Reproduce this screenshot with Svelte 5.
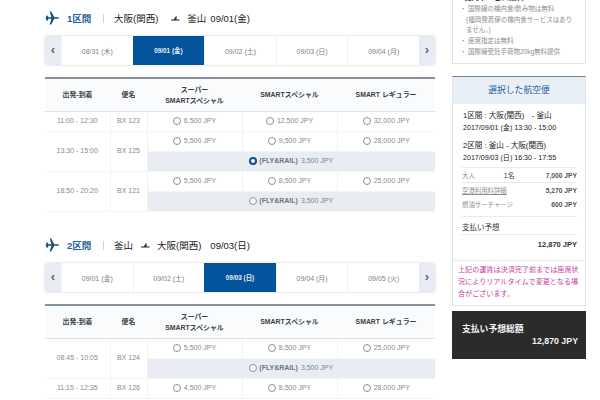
<script>
  const sections = [
    {
      label: "1区間",
      from: "大阪(関西)",
      to: "釜山",
      date: "09/01(金)",
      dates: ["08/31 (木)", "09/01 (金)", "09/02 (土)", "09/03 (日)", "09/04 (月)"],
      active: 1,
      flights: [
        { time: "11:00 - 12:30", no: "BX 123", fares: ["6,500", "12,500", "32,000"] },
        { time: "13:30 - 15:00", no: "BX 125", fares: ["5,500", "9,500", "28,000"], rail: "3,500", railOn: true },
        { time: "18:50 - 20:20", no: "BX 121", fares: ["5,500", "8,500", "25,000"], rail: "3,500" },
      ],
    },
    {
      label: "2区間",
      from: "釜山",
      to: "大阪(関西)",
      date: "09/03(日)",
      dates: ["09/01 (金)", "09/02 (土)", "09/03 (日)", "09/04 (月)", "09/05 (火)"],
      active: 2,
      flights: [
        { time: "08:45 - 10:05", no: "BX 124", fares: ["5,500", "8,500", "25,000"], rail: "3,500" },
        { time: "11:15 - 12:35", no: "BX 126", fares: ["4,500", "8,500", "28,000"] },
      ],
    },
  ];
</script>

<div class="page">
  <main class="left">
    {#each sections as s}
      <section class="leg">
        <h2 class="leg-title">
          <svg class="plane" viewBox="0 0 24 24" width="14" height="14">
            <path d="M1 12 L3 7.500 L4.500 7.500 L6 10.800 L11 10.800 L8 1 L10.500 1 L16 10.800 L21 10.800 C23 10.800 24 11.400 24 12 C24 12.600 23 13.200 21 13.200 L16 13.200 L10.500 23 L8 23 L11 13.200 L6 13.200 L4.500 16.500 L3 16.500 Z" fill="#14507f" />
          </svg>
          <span class="leg-no">{s.label}</span>
          <span class="sep"></span>
          <span>{s.from}</span>
          <span class="arrow">
            <svg viewBox="0 0 9 5" width="9" height="5"><path d="M0 4 H8.500 M3 4 L5 1.200 V4" fill="none" stroke="#222" stroke-width="1.100" /></svg>
          </span>
          <span>{s.to}</span>
          <span class="leg-date">{s.date}</span>
        </h2>

        <div class="dates">
          <span class="nav">‹</span>
          {#each s.dates as d, i}
            <span class="date" class:on={i === s.active}>{d}</span>
          {/each}
          <span class="nav">›</span>
        </div>

        <table>
          <colgroup>
            <col style="width:65px" />
            <col style="width:37px" />
            <col style="width:95px" />
            <col style="width:95px" />
            <col style="width:98px" />
          </colgroup>
          <thead>
            <tr>
              <th>出発-到着</th>
              <th>便名</th>
              <th>スーパー<br />SMARTスペシャル</th>
              <th>SMARTスペシャル</th>
              <th>SMART レギュラー</th>
            </tr>
          </thead>
          <tbody>
            {#each s.flights as f}
              <tr>
                <td rowspan={f.rail ? 2 : 1}>{f.time}</td>
                <td rowspan={f.rail ? 2 : 1}>{f.no}</td>
                {#each f.fares as fare}
                  <td><span class="radio"></span>{fare} JPY</td>
                {/each}
              </tr>
              {#if f.rail}
                <tr>
                  <td class="rail" colspan="3">
                    <span class="radio" class:checked={f.railOn}></span><b>(FLY&amp;RAIL)</b> {f.rail} JPY
                  </td>
                </tr>
              {/if}
            {/each}
          </tbody>
        </table>
      </section>
    {/each}
  </main>

  <aside class="right">
    <div class="card notes">
      <h4>機内サービス無料</h4>
      <ul>
        <li>国際線の機内食/飲み物は無料<br /><span class="paren">(福岡発着便の機内食サービスはありません。)</span></li>
        <li>座席指定は無料</li>
        <li>国際線受託手荷物20kg無料提供</li>
      </ul>
    </div>

    <div class="card summary">
      <h3>選択した航空便</h3>
      <div class="trips">
        <p class="trip">1区間 : 大阪(関西)　- 釜山</p>
        <p class="when">2017/09/01 (金) 13:30 - 15:00</p>
        <p class="trip second">2区間 : 釜山 - 大阪(関西)</p>
        <p class="when">2017/09/03 (日) 16:30 - 17:55</p>
      </div>
      <div class="costs">
        <div class="cost ruled"><span>大人</span><span class="count">1名</span><b>7,000 JPY</b></div>
        <div class="cost"><span class="link">空港利用料詳細</span><b>5,270 JPY</b></div>
        <div class="cost"><span>燃油サーチャージ</span><b>600 JPY</b></div>
      </div>
      <div class="forecast">支払い予想</div>
      <div class="forecast-value">12,870 JPY</div>
      <p class="warn">上記の運賃は決済完了前までは座席状況によりリアルタイムで変更となる場合がございます。</p>
    </div>

    <div class="total">
      <div>支払い予想総額</div>
      <div class="total-value">12,870 JPY</div>
    </div>
  </aside>
</div>

<style>
  :global(body) {
    margin: 0;
    background: #fff;
  }

  .page {
    display: flex;
    gap: 17px;
    width: 600px;
    height: 400px;
    padding-left: 45px;
    box-sizing: border-box;
    overflow: hidden;
    font-family: "Liberation Sans", "Noto Sans CJK JP", sans-serif;
    color: #333;
  }

  .left {
    width: 390px;
    flex: none;
  }

  .leg {
    height: 227px;
    padding-top: 9px;
    box-sizing: border-box;
  }

  .leg-title {
    display: flex;
    align-items: center;
    height: 18px;
    margin: 0 0 9px;
    font-size: 9.500px;
    font-weight: 400;
    color: #222;
  }

  .plane {
    margin-right: 8px;
  }

  .leg-no {
    color: #1d5f9c;
    width: 28px;
    font-weight: 700;
  }

  .sep {
    width: 1px;
    height: 9px;
    background: #cfd4da;
    margin: 0 10px 0 8px;
  }

  .arrow {
    display: flex;
    margin: 0 7px 0 8px;
  }

  .leg:first-child .arrow {
    margin-left: 13px;
  }

  .leg-date {
    margin-left: 4px;
  }

  .leg + .leg .leg-date {
    margin-left: 9px;
  }

  .dates {
    display: grid;
    grid-template-columns: 16px repeat(5, 1fr) 16px;
    height: 29px;
    border-radius: 3px;
    box-shadow: 0 0 2px #b4bac2;
    margin-bottom: 12px;
    overflow: hidden;
  }

  .date {
    display: flex;
    align-items: center;
    justify-content: center;
    font-size: 7px;
    color: #7c828a;
    border-left: 1px solid #f1f3f5;
  }

  .date.on {
    background: #03549c;
    color: #e8eef6;
    font-size: 6.400px;
    font-weight: 700;
    border-left: 0;
  }

  .nav {
    display: flex;
    align-items: center;
    justify-content: center;
    background: #e8ebf3;
    font-size: 13px;
    font-weight: 700;
    color: #5c6670;
    padding-bottom: 3px;
    box-sizing: border-box;
  }

  table {
    width: 390px;
    table-layout: fixed;
    border-collapse: collapse;
    border-top: 2px solid #87919b;
    border-bottom: 1px solid #d6dade;
  }

  th {
    height: 33px;
    padding: 0;
    box-sizing: border-box;
    font-size: 6.900px;
    line-height: 11px;
    font-weight: 700;
    color: #3a3f45;
    background: #fafbfc;
    border-bottom: 1px solid #dfe2e6;
  }

  td {
    height: 20px;
    padding: 0;
    box-sizing: border-box;
    text-align: center;
    font-size: 7px;
    line-height: 12px;
    color: #868b92;
    border-right: 1px solid #f1f3f5;
    border-bottom: 1px solid #f4f5f7;
  }

  td:last-child {
    border-right: 0;
  }

  .rail {
    background: #e9ecf3;
    color: #80868e;
  }

  .rail b {
    font-weight: 700;
    color: #6f767e;
    margin: 0 1px 0 2px;
  }

  .radio {
    display: inline-block;
    width: 8px;
    height: 8px;
    margin-right: 3px;
    vertical-align: -2px;
    border: 1px solid #8d9197;
    border-radius: 50%;
    background: #fff;
    box-sizing: border-box;
  }

  .rail .radio {
    margin-right: 0;
  }

  .radio.checked {
    border: 2.500px solid #0a4f97;
    background: #fff;
  }

  .right {
    width: 134px;
    flex: none;
  }

  .card {
    border: 1px solid #e0e3e8;
    box-sizing: border-box;
  }

  .notes {
    height: 72px;
    margin: -8px 0 12px;
    padding: 0 10px 0 11px;
  }

  .notes h4 {
    margin: 0 0 1px;
    font-size: 7.500px;
    line-height: 10px;
    color: #333;
  }

  .notes ul {
    margin: 0;
    padding: 0;
    list-style: none;
  }

  .notes li {
    position: relative;
    padding-left: 4px;
    font-size: 6.500px;
    line-height: 10.700px;
    color: #8b8f96;
  }

  .notes li::before {
    content: "・";
    position: absolute;
    left: -4px;
  }

  .paren {
    display: block;
    margin-left: -2px;
  }

  .summary {
    height: 230px;
    border-top: 1px solid #77848f;
    margin-bottom: 5px;
  }

  .summary h3 {
    margin: 0;
    height: 27px;
    line-height: 26px;
    text-align: center;
    font-size: 8.800px;
    font-weight: 400;
    color: #1d5f9c;
    background: #e9eff6;
  }

  .trips {
    padding: 6px 9px 0 10px;
    height: 59px;
    box-sizing: border-box;
  }

  .trip,
  .when {
    margin: 0;
    font-size: 7.600px;
    line-height: 12px;
    color: #222;
  }

  .when {
    font-size: 7.100px;
  }

  .second {
    margin-top: 6px;
  }

  .costs {
    margin: 4px 8px 0 9px;
    border-top: 1px solid #e8eaed;
    border-bottom: 1px solid #e8eaed;
    padding-bottom: 5px;
  }

  .cost {
    display: flex;
    align-items: center;
    height: 14px;
    font-size: 6.400px;
    color: #8b8f96;
  }

  .cost.ruled {
    border-bottom: 1px solid #e8eaed;
  }

  .cost b {
    margin-left: auto;
    font-size: 6.700px;
    color: #555;
  }

  .count {
    margin-left: 29px;
    font-size: 7px;
    color: #444;
  }

  .link {
    text-decoration: underline;
  }

  .forecast {
    margin: 5px 8px 0 9px;
    font-size: 7.500px;
    line-height: 12px;
    color: #333;
    border-bottom: 1px solid #e8eaed;
  }

  .forecast-value {
    margin: 4px 8px 9px 9px;
    text-align: right;
    font-size: 7.500px;
    line-height: 12px;
    font-weight: 700;
    color: #333;
  }

  .warn {
    margin: 0;
    padding: 3px 4px 0 5px;
    border-top: 1px solid #e8eaed;
    font-size: 7.100px;
    line-height: 12px;
    color: #c63fa6;
  }

  .total {
    height: 48px;
    padding: 12px 8px 0 10px;
    box-sizing: border-box;
    background: #2b2b2b;
    color: #f4f4f4;
    font-size: 8.800px;
    line-height: 12px;
    font-weight: 700;
  }

  .total-value {
    text-align: right;
  }
</style>
